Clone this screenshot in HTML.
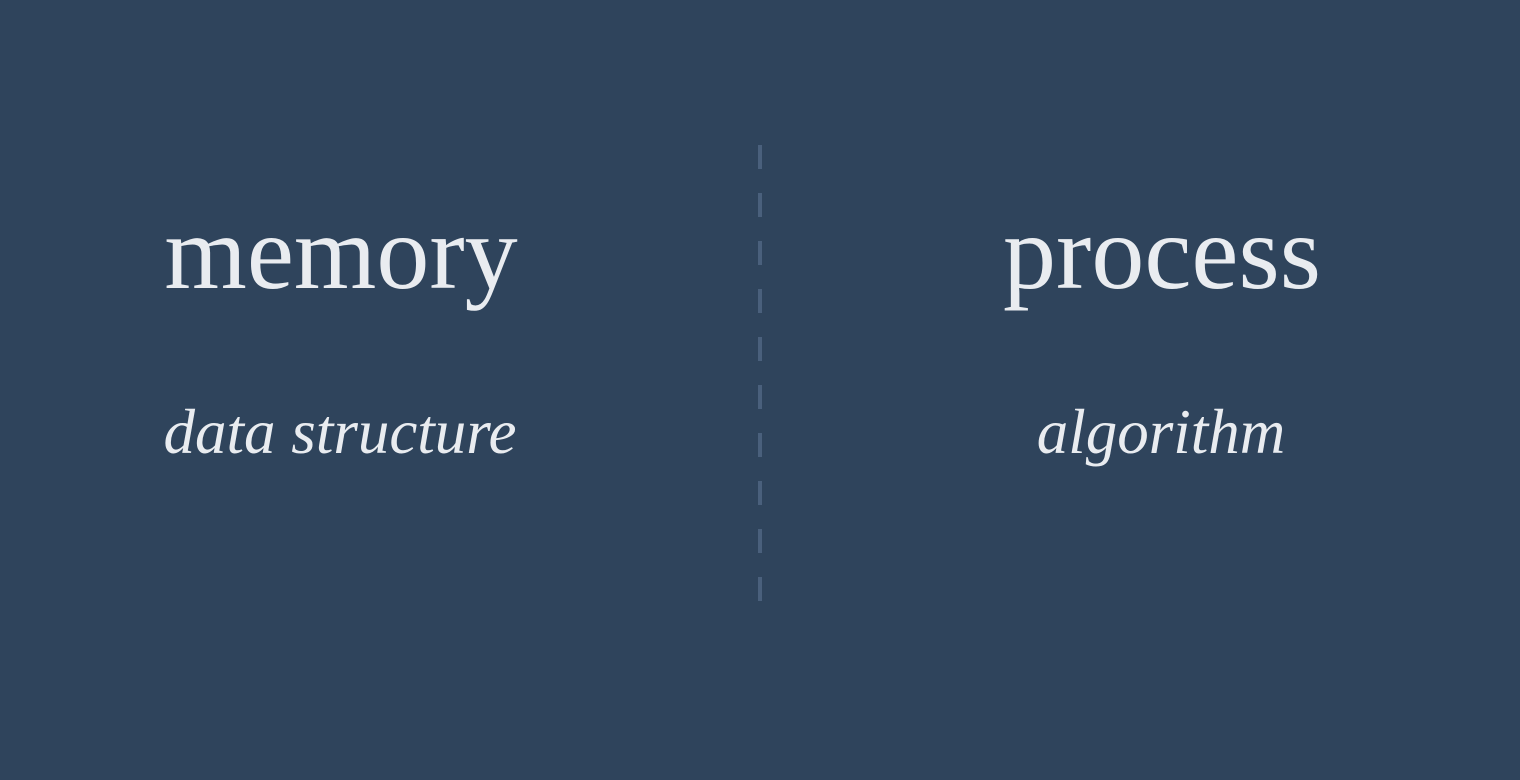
<!DOCTYPE html>
<html><head><meta charset="utf-8"><style>
html,body{margin:0;padding:0;}
body{width:1520px;height:780px;background:#2f445c;position:relative;overflow:hidden;font-family:"Liberation Serif",serif;color:#e9ecf0;}
.t{position:absolute;white-space:nowrap;transform:translateX(-50%);line-height:1;}
.big{font-size:106px;}
.it{font-size:63px;font-style:italic;}
.line{position:absolute;left:758px;top:145px;width:4px;height:456px;
background:repeating-linear-gradient(to bottom,#4a607c 0,#4a607c 24px,transparent 24px,transparent 48px);}
</style></head><body>
<div class="t big" style="left:341px;top:200px;">memory</div>
<div class="t it" style="left:340px;top:401px;">data structure</div>
<div class="line"></div>
<div class="t big" style="left:1162px;top:200px;">process</div>
<div class="t it" style="left:1161px;top:401px;">algorithm</div>
</body></html>
